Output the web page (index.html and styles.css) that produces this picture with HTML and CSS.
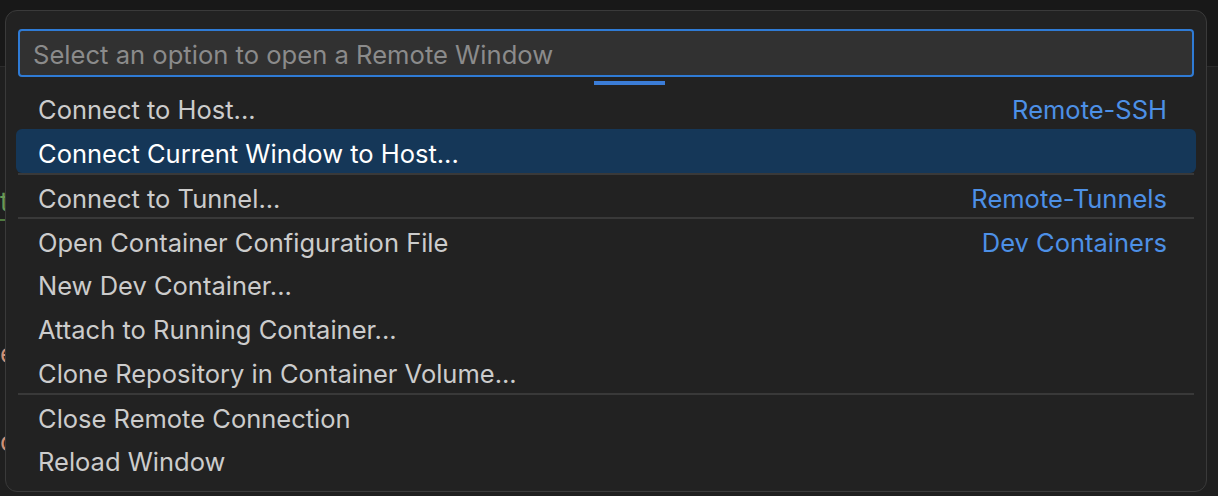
FILE: index.html
```html
<!DOCTYPE html>
<html lang="en">
<head>
<meta charset="utf-8">
<title>Remote Window</title>
<link rel="stylesheet" href="styles.css">
</head>
<body>
<div class="editor">
  <div class="editor-tabs"></div>
  <div class="editor-body">
    <span class="frag frag-green">t</span>
    <span class="frag frag-orange1">e</span>
    <span class="frag frag-orange2">o</span>
  </div>
</div>
<div class="quick-input">
  <div class="input-box">
    <input class="input" type="text" placeholder="Select an option to open a Remote Window">
  </div>
  <div class="progress"><div class="progress-bit"></div></div>
  <div class="list">
    <div class="row"><span class="label">Connect to Host...</span><span class="desc">Remote-SSH</span></div>
    <div class="row selected"><span class="label">Connect Current Window to Host...</span></div>
    <div class="sep"></div>
    <div class="row short"><span class="label">Connect to Tunnel...</span><span class="desc">Remote-Tunnels</span></div>
    <div class="sep"></div>
    <div class="row short"><span class="label">Open Container Configuration File</span><span class="desc">Dev Containers</span></div>
    <div class="row"><span class="label">New Dev Container...</span></div>
    <div class="row"><span class="label">Attach to Running Container...</span></div>
    <div class="row"><span class="label">Clone Repository in Container Volume...</span></div>
    <div class="sep"></div>
    <div class="row short"><span class="label">Close Remote Connection</span></div>
    <div class="row"><span class="label">Reload Window</span></div>
  </div>
</div>
</body>
</html>
```
FILE: styles.css
```css
html, body {
  margin: 0;
  padding: 0;
  width: 1218px;
  height: 496px;
  overflow: hidden;
  background: #181818;
  font-family: "Inter", "Noto Sans", sans-serif;
}

.editor {
  width: 1218px;
  height: 496px;
}

.editor-tabs {
  height: 66px;
  border-bottom: 1px solid #2b2b2b;
}

.editor-body {
  position: relative;
  height: 429px;
  background: #1f1f1f;
}

.frag {
  position: absolute;
  left: 0;
  font-size: 26px;
  line-height: 30px;
}

.frag-green {
  top: 120px;
  color: #6a9955;
  border-bottom: 2px solid #4f7a3f;
  padding-bottom: 2px;
  width: 12px;
}

.frag-orange1 {
  top: 272px;
  color: #ce9178;
}

.frag-orange2 {
  top: 360px;
  color: #ce9178;
}

.quick-input {
  position: absolute;
  left: 5px;
  top: 10px;
  width: 1200px;
  height: 480px;
  box-sizing: content-box;
  border: 1px solid #3a3a3a;
  border-radius: 12px;
  background: #222222;
  padding: 0;
  display: flex;
  flex-direction: column;
}

.input-box {
  margin: 18px 12px 0 12px;
  height: 48px;
  box-sizing: border-box;
  border: 2px solid #2f7bd5;
  border-radius: 4px;
  background: #313131;
  display: flex;
  align-items: center;
}

.input {
  flex: 1;
  border: 0;
  outline: 0;
  background: transparent;
  font-family: "Inter", "Noto Sans", sans-serif;
  font-size: 25.6px;
  color: #cccccc;
  padding: 3px 0 0 13px;
  height: 44px;
  box-sizing: border-box;
}

.input::placeholder {
  color: #8b8b8b;
}

.progress {
  height: 4px;
  margin-top: 4px;
  display: flex;
}

.progress-bit {
  width: 71px;
  height: 4px;
  margin-left: 588px;
  background: #3b7dd8;
}

.list {
  margin: 0 10px;
  display: flex;
  flex-direction: column;
}

.row {
  height: 44px;
  box-sizing: border-box;
  display: flex;
  align-items: center;
  justify-content: space-between;
  padding: 4px 29px 0 22px;
  font-size: 25.5px;
  color: #cccccc;
  border-radius: 6px;
}

.row.short {
  height: 42px;
}

.row.selected {
  background: #153758;
  color: #ffffff;
}

.desc {
  color: #4d90e6;
}

.sep {
  height: 2px;
  margin: 0 2px;
  background: #393939;
}
```
